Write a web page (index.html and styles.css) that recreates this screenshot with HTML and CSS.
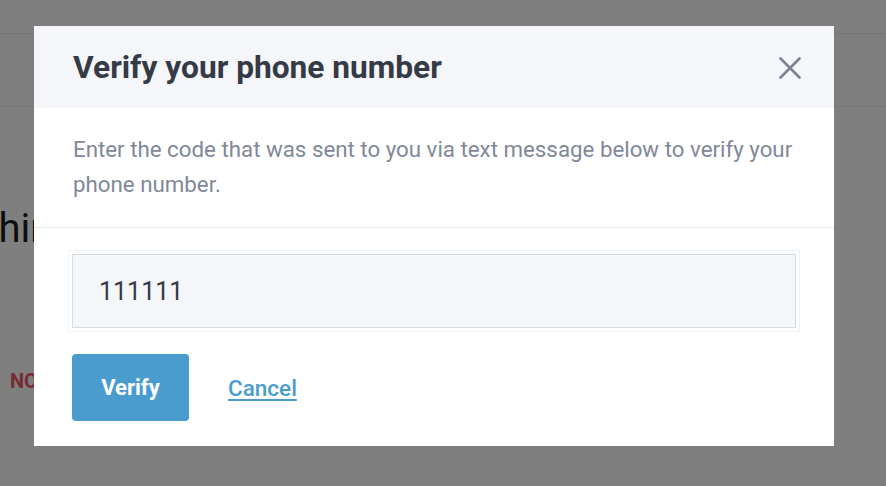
FILE: index.html
```html
<!DOCTYPE html>
<html lang="en">
<head>
<meta charset="utf-8">
<title>Verify your phone number</title>
<link rel="stylesheet" href="styles.css">
</head>
<body>
<div class="page">
  <div class="page-header"></div>
  <h1 class="page-title">Confirm your phone number within</h1>
  <div class="page-status">NO</div>
</div>
<div class="overlay">
  <div class="modal" role="dialog">
    <div class="modal-header">
      <h2 class="modal-title">Verify your phone number</h2>
      <button class="modal-close" aria-label="Close">
        <svg width="22" height="22" viewBox="0 0 22 22"><path d="M1.5 1.5 L20.5 20.5 M20.5 1.5 L1.5 20.5" stroke="#7b8391" stroke-width="2.6" stroke-linecap="round" fill="none"/></svg>
      </button>
    </div>
    <div class="modal-body">
      <p class="modal-text">Enter the code that was sent to you via text message below to verify your phone number.</p>
    </div>
    <div class="modal-form">
      <div class="field">
        <input class="code-input" type="text" value="111111">
      </div>
      <div class="actions">
        <button class="btn-verify">Verify</button>
        <a class="link-cancel" href="#">Cancel</a>
      </div>
    </div>
  </div>
</div>
</body>
</html>
```

FILE: styles.css
```css
* { box-sizing: border-box; }
html, body { margin: 0; padding: 0; }
body {
  width: 886px;
  height: 486px;
  overflow: hidden;
  background: #ffffff;
  font-family: Roboto, "Liberation Sans", sans-serif;
}
.page {
  padding-top: 33px;
}
.page-header {
  height: 74px;
  border-top: 1px solid #eaeaea;
  border-bottom: 1px solid #eaeaea;
  background: #fdfdfd;
}
.page-title {
  margin: 98px 0 0 -560px;
  font-size: 40px;
  font-weight: 400;
  color: #1b1b1b;
  white-space: nowrap;
  line-height: 48px;
}
.page-status {
  margin: 116px 0 0 10px;
  font-size: 20px;
  font-weight: 700;
  color: #f25560;
}
.overlay {
  position: fixed;
  inset: 0;
  background: rgba(0, 0, 0, 0.5);
  padding: 26px 0 0 34px;
}
.modal {
  width: 800px;
  background: #ffffff;
}
.modal-header {
  height: 82px;
  background: #f5f6fa;
  display: flex;
  align-items: center;
  justify-content: space-between;
  padding: 0 33px 0 39px;
}
.modal-title {
  margin: 2px 0 0 0;
  font-size: 31.7px;
  font-weight: 700;
  color: #343a46;
  line-height: 36px;
}
.modal-close {
  border: 0;
  background: none;
  padding: 0;
  width: 22px;
  height: 22px;
  display: flex;
  margin-top: 2px;
}
.modal-body {
  padding: 24px 20px 25px 39px;
  border-bottom: 1px solid #e8eaee;
}
.modal-text {
  margin: 0;
  font-size: 22.3px;
  line-height: 35px;
  color: #80889a;
}
.modal-form {
  padding: 26px 38px 25px 38px;
}
.field {
  outline: 1px solid #edf3f8;
  outline-offset: 3px;
}
.code-input {
  display: block;
  width: 724px;
  height: 74px;
  border: 1px solid #d5dde3;
  background: #f5f6fa;
  padding: 0 0 0 26px;
  font-family: Roboto, "Liberation Sans", sans-serif;
  font-size: 25px;
  color: #343a46;
  outline: none;
}
.actions {
  margin-top: 26px;
  display: flex;
  align-items: center;
  gap: 39px;
}
.btn-verify {
  width: 117px;
  height: 67px;
  border: 0;
  border-radius: 4px;
  background: #4a9ccf;
  color: #ffffff;
  font-family: Roboto, "Liberation Sans", sans-serif;
  font-size: 22px;
  font-weight: 700;
}
.link-cancel {
  font-size: 22.5px;
  font-weight: 500;
  color: #4a9ccf;
  text-decoration: underline;
  text-underline-offset: 3px;
}
```
